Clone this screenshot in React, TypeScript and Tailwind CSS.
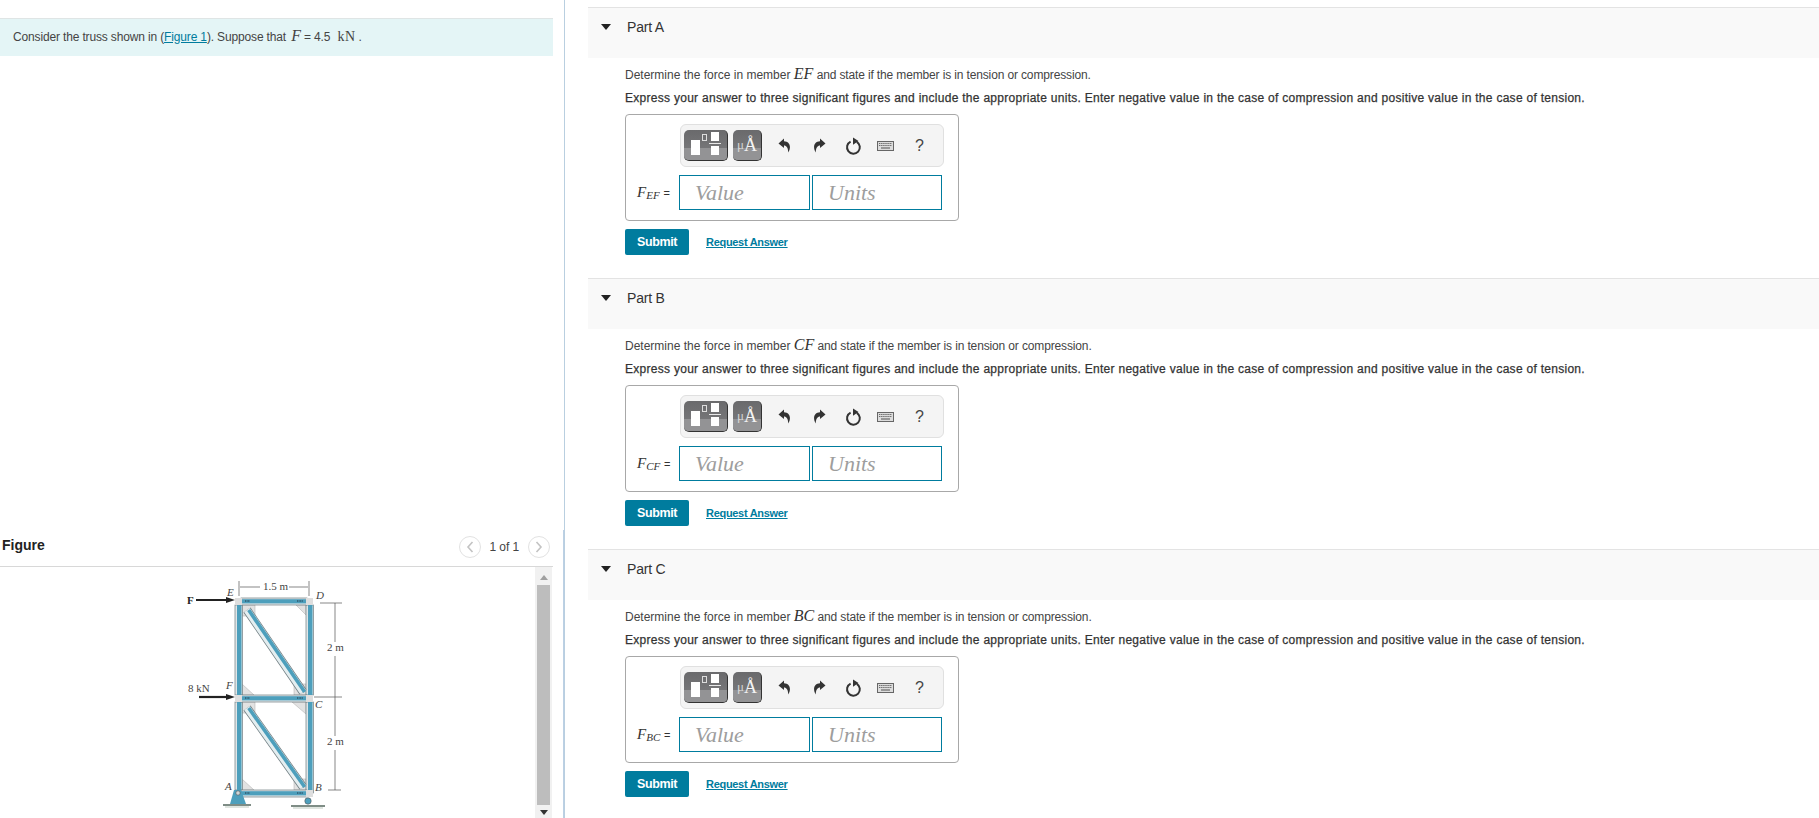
import React from "react";

const sans = "font-['Liberation_Sans',Arial,sans-serif]";
const serif = "font-['Liberation_Serif','Times_New_Roman',serif]";

function Toolbar() {
  return (
    <div className="ml-[54px] flex h-[43px] w-[264px] items-center rounded-[6px] border border-[#e0e0e0] bg-[#f4f4f4] pl-[3px]">
      <div className="relative h-[31px] w-[44px] overflow-hidden rounded-[5px] border-b border-r border-[#333] bg-gradient-to-b from-[#6a6a6c] to-[#7d7d7f]">
        <div className="absolute inset-x-0 bottom-0 h-[12px] bg-[#939395]" />
        <div className="absolute left-[7px] top-[10px] h-[15px] w-[9px] bg-white" />
        <div className="absolute left-[18px] top-[4px] h-[7px] w-[5px] border border-[#ddd]" />
        <div className="absolute left-[27px] top-[2px] h-[9px] w-[8px] bg-white" />
        <div className="absolute left-[25px] top-[13px] h-[1px] w-[12px] bg-[#e8e8e8]" />
        <div className="absolute left-[27px] top-[16px] h-[9px] w-[8px] bg-white" />
      </div>
      <div className={`relative ml-[5px] h-[31px] w-[29px] overflow-hidden rounded-[5px] border-b border-r border-[#333] bg-gradient-to-b from-[#6a6a6c] to-[#7d7d7f] ${serif}`}>
        <div className="absolute inset-x-0 bottom-0 h-[12px] bg-[#939395]" />
        <div className="absolute inset-0 flex items-center justify-center pb-[1px] leading-none text-[#f4f4f4]">
          <span className="text-[13px] text-[#d8d8d8]">μ</span>
          <span className="text-[18px]">Å</span>
        </div>
      </div>
      <svg className="ml-[16px]" width="13" height="15" viewBox="0 0 13 15"><path d="M6 0.5 L0.5 5.5 L6 10 V7.5 C8.5 7.5 10 9.5 10.3 14.5 C13.5 9 12 3.5 6 3.2 Z" fill="#333" /></svg>
      <svg className="ml-[22px]" width="13" height="15" viewBox="0 0 13 15"><path d="M7 0.5 L12.5 5.5 L7 10 V7.5 C4.5 7.5 3 9.5 2.7 14.5 C-0.5 9 1 3.5 7 3.2 Z" fill="#333" /></svg>
      <svg className="ml-[19px]" width="17" height="18" viewBox="0 0 17 18"><path d="M5.6 4.6 A6.4 6.4 0 1 0 11.8 4.9" fill="none" stroke="#333" strokeWidth="2" /><path d="M8 0.5 L13.5 4 L8 7.8 Z" fill="#333" /></svg>
      <svg className="ml-[15px]" width="17" height="10" viewBox="0 0 17 10"><rect x="0.5" y="0.5" width="16" height="9" fill="#dcdcdc" stroke="#666" /><path d="M2 2.5h13M2 4.5h13" stroke="#6a6a6a" strokeWidth="1" strokeDasharray="1.4 0.7" /><path d="M4 7h9" stroke="#6a6a6a" strokeWidth="1.2" /></svg>
      <span className={`ml-[21px] text-[16px] leading-none text-[#444] ${sans}`}>?</span>
    </div>
  );
}

function Part({ name, member, sub }: { name: string; member: string; sub: string }) {
  return (
    <section className="h-[271px]">
      <div className="flex h-[51px] items-start border-t border-[#e3e3e3] bg-[#f9f9f9] pt-[11px]">
        <svg className="ml-[13px] mt-[5px]" width="10" height="6" viewBox="0 0 10 6"><path d="M0 0 H10 L5 6 Z" fill="#222" /></svg>
        <span className="ml-[16px] text-[14px] leading-[16px] tracking-[-0.2px] text-[#333]">{name}</span>
      </div>
      <div className="pl-[37px]">
        <p className="mt-[8px] h-[17px] text-[12px] leading-[17px] text-[#444]">
          Determine the force in member <i className={`${serif} text-[16px] leading-none text-[#333]`}>{member}</i> <span className="tracking-[-0.14px]">and state if the member is in tension or compression.</span>
        </p>
        <p className="mt-[7px] h-[17px] whitespace-nowrap text-[12px] leading-[17px] tracking-[0.28px] text-[#333] [-webkit-text-stroke:0.25px_#333]">
          Express your answer to three significant figures and include the appropriate units. Enter negative value in the case of compression and positive value in the case of tension.
        </p>
        <div className="mt-[7px] h-[107px] w-[334px] rounded-[4px] border border-[#a8a8a8] pt-[9px]">
          <Toolbar />
          <div className="mt-[8px] flex items-center">
            <span className={`ml-[11px] w-[42px] whitespace-nowrap text-[15px] leading-none text-[#333] ${serif}`}>
              <i>F</i><i className="align-[-2px] text-[11px] leading-none">{sub}</i> <span className={`${sans} text-[11px]`}>=</span>
            </span>
            <div className={`flex h-[35px] w-[131px] items-center border border-[#007c9e] pl-[15px] text-[22px] italic text-[#9d9d9d] ${serif}`}>Value</div>
            <div className={`ml-[2px] flex h-[35px] w-[130px] items-center border border-[#007c9e] pl-[15px] text-[22px] italic text-[#9d9d9d] ${serif}`}>Units</div>
          </div>
        </div>
        <div className="mt-[8px] flex items-center">
          <div className="flex h-[26px] w-[64px] items-center justify-center rounded-[2px] bg-[#007c9e] text-[12.5px] font-bold tracking-[-0.4px] text-white">Submit</div>
          <span className="ml-[17px] text-[11px] font-bold tracking-[-0.3px] text-[#007c9e] underline">Request Answer</span>
        </div>
      </div>
    </section>
  );
}

function Truss() {
  const blue = "#4d9fbc";
  const edge = "#6f7c80";
  const col = (x: number, y1: number, y2: number) => (
    <>
      <rect x={x} y={y1} width="7.5" height={y2 - y1} fill="#dfe6e8" stroke={edge} strokeWidth="0.7" />
      <rect x={x + 2} y={y1} width="4.5" height={y2 - y1} fill={blue} />
    </>
  );
  const beam = (y: number) => (
    <>
      <rect x="241" y={y} width="66" height="7" fill="#dfe6e8" stroke={edge} strokeWidth="0.7" />
      <rect x="241" y={y + 1.2} width="66" height="4.2" fill={blue} />
      <path d={`M245 ${y + 3}h5M297 ${y + 3}h6`} stroke="#234" strokeWidth="1" strokeDasharray="1 0.6" />
    </>
  );
  const diag = (y1: number, y2: number) => (
    <>
      <line x1="247" y1={y1} x2="303" y2={y2} stroke={edge} strokeWidth="8.5" />
      <line x1="247" y1={y1} x2="303" y2={y2} stroke="#e4eef0" strokeWidth="7" />
      <line x1="248.7" y1={y1} x2="304.7" y2={y2} stroke={blue} strokeWidth="3.6" />
    </>
  );
  const gus = (p: string) => <path d={p} fill="#e2e2e2" stroke="#aaa" strokeWidth="0.5" />;
  const label = "#444";
  return (
    <svg width="200" height="251" viewBox="170 567 200 251" className="ml-[170px]">
      {gus("M242 605 H255 V616 H242 Z")}
      {gus("M296 605 H306 V615 Z")}
      {gus("M242 684 L254 695 H242 Z")}
      {gus("M294 695 V684 H306 V695 Z")}
      {gus("M242 702 H255 V713 H242 Z")}
      {gus("M292 702 H306 V714 Z")}
      {gus("M242 779 L254 790 H242 Z")}
      {gus("M294 790 V779 H306 V790 Z")}
      {col(235, 605, 695)}
      {col(235, 702, 790)}
      {col(306, 605, 695)}
      {col(306, 702, 793)}
      {beam(598)}
      {beam(695)}
      {beam(790)}
      <rect x="235" y="598" width="7" height="7" fill="#dedede" />
      <rect x="306" y="598" width="7" height="7" fill="#dedede" />
      <rect x="235" y="695" width="7" height="7" fill="#dedede" />
      <rect x="306" y="695" width="7" height="7" fill="#dedede" />
      <rect x="306" y="790" width="7" height="7" fill="#dedede" />
      {diag(610, 692)}
      {diag(708, 787)}
      <path d="M230 804 L234 790 H241 L246 804 Z" fill={blue} />
      <circle cx="238" cy="793" r="2.2" fill="#cfd6d8" stroke="#555" strokeWidth="0.6" />
      <rect x="223" y="804" width="28" height="2" fill="#7f8d86" />
      <rect x="225" y="806" width="24" height="2" fill="#dfe5e0" />
      <circle cx="308" cy="801" r="3.2" fill={blue} stroke="#555" strokeWidth="0.6" />
      <rect x="291" y="805" width="34" height="2" fill="#7f8d86" />
      <rect x="293" y="807" width="30" height="2" fill="#dfe5e0" />
      <line x1="196" y1="600" x2="229" y2="600" stroke="#222" strokeWidth="2.2" />
      <path d="M235 600 L226 597 V603 Z" fill="#222" />
      <line x1="199" y1="697" x2="229" y2="697" stroke="#222" strokeWidth="2.2" />
      <path d="M235 697 L226 694 V700 Z" fill="#222" />
      <g stroke="#555" strokeWidth="0.7">
        <line x1="239" y1="581" x2="239" y2="596" />
        <line x1="309" y1="581" x2="309" y2="596" />
        <line x1="240" y1="587" x2="260" y2="587" />
        <line x1="289" y1="587" x2="308" y2="587" />
        <line x1="335" y1="603" x2="335" y2="642" />
        <line x1="335" y1="656" x2="335" y2="736" />
        <line x1="335" y1="750" x2="335" y2="790" />
        <line x1="320" y1="603" x2="342" y2="603" />
        <line x1="314" y1="697" x2="342" y2="697" />
        <line x1="328" y1="790" x2="341" y2="790" />
      </g>
      <g fontFamily="'Liberation Serif', serif" fill={label} fontSize="11">
        <text x="263" y="590">1.5 m</text>
        <text x="327" y="651">2 m</text>
        <text x="327" y="745">2 m</text>
        <text x="188" y="692">8 kN</text>
        <text x="187" y="604" fontWeight="bold" fill="#222">F</text>
        <g fontStyle="italic">
          <text x="227" y="596">E</text>
          <text x="316" y="599">D</text>
          <text x="226" y="689">F</text>
          <text x="315" y="708">C</text>
          <text x="225" y="790">A</text>
          <text x="315" y="791">B</text>
        </g>
      </g>
    </svg>
  );
}

export default function App() {
  return (
    <div className={`flex h-[818px] w-[1819px] overflow-hidden bg-white ${sans}`}>
      <aside className="flex w-[565px] flex-col border-r border-[#b9cfe0]">
        <div className="mr-[11px] mt-[18px] flex h-[38px] items-center border-t border-[#dfe5e5] bg-[#e4f5f6] pb-[2px] pl-[13px] text-[12px] tracking-[-0.15px] text-[#444]">
          <span>
            Consider the truss shown in (<span className="text-[#007c9e] underline">Figure 1</span>). Suppose that <i className={`${serif} ml-[2px] text-[16px] leading-none`}>F</i> = 4.5 <span className={`${serif} ml-[4px] text-[14px] leading-none tracking-[0.4px]`}>kN</span> .
          </span>
        </div>
        <div className="mt-auto border-r border-[#bcd0e4] pr-[10px]">
          <div className="flex h-[37px] items-center border-b border-[#d8d8d8] pb-[3px]">
            <span className="mb-[4px] ml-[2px] text-[14px] font-bold leading-none text-[#222]">Figure</span>
            <div className="ml-auto mr-[3px] flex items-center">
              <span className="flex h-[22px] w-[22px] items-center justify-center rounded-full border border-[#e2e2e2]">
                <svg width="8" height="12" viewBox="0 0 8 12"><path d="M6.5 1 L2 6 L6.5 11" fill="none" stroke="#c3c3c3" strokeWidth="1.6" /></svg>
              </span>
              <span className="mx-[9px] text-[12px] tracking-[-0.1px] text-[#444]">1 of 1</span>
              <span className="flex h-[22px] w-[22px] items-center justify-center rounded-full border border-[#e2e2e2]">
                <svg width="8" height="12" viewBox="0 0 8 12"><path d="M1.5 1 L6 6 L1.5 11" fill="none" stroke="#c3c3c3" strokeWidth="1.6" /></svg>
              </span>
            </div>
          </div>
          <div className="flex h-[251px] justify-between">
            <Truss />
            <div className="mr-[1px] flex w-[17px] flex-col items-center bg-[#f1f1f1]">
              <svg className="mt-[8px]" width="8" height="5" viewBox="0 0 8 5"><path d="M4 0 L8 5 H0 Z" fill="#a0a0a0" /></svg>
              <div className="mt-[5px] h-[220px] w-[13px] bg-[#bdbdbd]" />
              <svg className="mt-[5px]" width="8" height="5" viewBox="0 0 8 5"><path d="M0 0 H8 L4 5 Z" fill="#333" /></svg>
            </div>
          </div>
        </div>
      </aside>
      <main className="ml-[23px] flex-1 pt-[7px]">
        <Part name="Part A" member="EF" sub="EF" />
        <Part name="Part B" member="CF" sub="CF" />
        <Part name="Part C" member="BC" sub="BC" />
      </main>
    </div>
  );
}
